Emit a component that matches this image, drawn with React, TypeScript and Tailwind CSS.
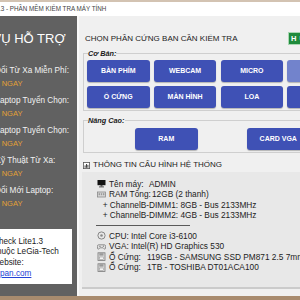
import React from "react";

function MonitorIcon() {
  return (
    <svg width="9" height="9" viewBox="0 0 9 9" className="shrink-0 mr-[3px]">
      <rect x="0.5" y="1" width="8" height="5.2" fill="#111" />
      <rect x="3.5" y="6.2" width="2" height="1.3" fill="#333" />
      <rect x="2" y="7.4" width="5" height="1" fill="#555" />
    </svg>
  );
}
function RamIcon() {
  return (
    <svg width="9" height="9" viewBox="0 0 9 9" className="shrink-0 mr-[3px]">
      <rect x="0.5" y="2" width="8" height="5" fill="#d8d8d8" stroke="#8a8a8a" strokeWidth="0.8" />
      <rect x="1.6" y="3.2" width="1.4" height="2" fill="#9a9a9a" />
      <rect x="3.8" y="3.2" width="1.4" height="2" fill="#9a9a9a" />
      <rect x="6" y="3.2" width="1.4" height="2" fill="#9a9a9a" />
    </svg>
  );
}
function CpuIcon() {
  return (
    <svg width="9" height="9" viewBox="0 0 9 9" className="shrink-0 mr-[3px]">
      <circle cx="4.5" cy="4.5" r="3.6" fill="#e8e8e8" stroke="#7a7a7a" strokeWidth="0.9" />
      <circle cx="4.5" cy="4.5" r="1.3" fill="#8a8a8a" />
    </svg>
  );
}
function VgaIcon() {
  return (
    <svg width="9" height="9" viewBox="0 0 9 9" className="shrink-0 mr-[3px]">
      <path d="M1.5 2.8 H7.5 Q8.6 2.8 8.6 4.5 L8.3 6.8 Q7.8 7.6 6.8 6.6 L6 5.8 H3 L2.2 6.6 Q1.2 7.6 0.7 6.8 L0.4 4.5 Q0.4 2.8 1.5 2.8 Z" fill="#e2e2e2" stroke="#7a7a7a" strokeWidth="0.8" />
      <rect x="2" y="3.9" width="1.8" height="0.7" fill="#777" />
      <circle cx="6.4" cy="4.2" r="0.6" fill="#777" />
    </svg>
  );
}
function DiskIcon() {
  return (
    <svg width="9" height="9" viewBox="0 0 9 9" className="shrink-0 mr-[3px]">
      <rect x="1" y="0.8" width="7" height="7.6" fill="#dcdcdc" stroke="#7a7a7a" strokeWidth="0.8" />
      <rect x="2.3" y="1.2" width="4.2" height="2.4" fill="#9a9a9a" />
      <rect x="2.3" y="5" width="4.4" height="2.6" fill="#f4f4f4" stroke="#8a8a8a" strokeWidth="0.5" />
    </svg>
  );
}
function ChartIcon() {
  return (
    <svg width="7" height="7" viewBox="0 0 7 7" className="shrink-0 mr-[3px]">
      <rect x="0.4" y="0.4" width="6.2" height="6.2" fill="#fff" stroke="#555" strokeWidth="0.8" />
      <rect x="1.6" y="3.4" width="1" height="2.4" fill="#444" />
      <rect x="3" y="2" width="1" height="3.8" fill="#444" />
      <rect x="4.4" y="2.8" width="1" height="3" fill="#444" />
    </svg>
  );
}

function Btn({ label, light }: { label: string; light?: boolean }) {
  return (
    <div
      className={
        "w-[62.5px] h-[22px] shrink-0 rounded-[3px] flex items-center justify-center text-white font-bold text-[7px] whitespace-nowrap shadow-[0_1px_1px_rgba(0,0,0,0.25)] " +
        (light ? "bg-[#7283cc]" : "bg-[#3f51b5]")
      }
    >
      {label}
    </div>
  );
}

function Pair({ label, ml }: { label: string; ml: string }) {
  return (
    <div className="flex flex-col mb-[4px]">
      <div className={"h-[13px] leading-[13px] text-[8.2px] text-[#f2f2f2] whitespace-nowrap " + ml}>{label}</div>
      <div className="h-[13px] leading-[13px] text-[7.5px] text-[#e3a036] whitespace-nowrap ml-[1.7px]">NGAY</div>
    </div>
  );
}

export default function App() {
  return (
    <div className="w-[300px] h-[300px] overflow-hidden bg-[#a88b6e] flex flex-col font-['Liberation_Sans',Arial,sans-serif]">
      <div className="h-[2px] shrink-0 bg-[#d3c3b2]" />
      <div className="h-[14px] shrink-0 bg-white flex items-center overflow-hidden">
        <span className="whitespace-nowrap text-[6.3px] text-[#444] -ml-[4.5px]">1.3 - PHẦN MỀM KIỂM TRA MÁY TÍNH</span>
      </div>
      <div className="h-[280px] shrink-0 flex">
        {/* left panel */}
        <div className="w-[77px] shrink-0 bg-[#616161] overflow-hidden flex flex-col">
          <div className="mt-[16px] h-[14px] leading-[14px] text-[13px] text-white whitespace-nowrap -ml-[7.5px]">VỤ HỖ TRỢ</div>
          <div className="mt-[18px] flex flex-col">
            <Pair label="Đổi Từ Xa Miễn Phí:" ml="-ml-[5px]" />
            <Pair label="Laptop Tuyển Chọn:" ml="-ml-[4.6px]" />
            <Pair label="Laptop Tuyển Chọn:" ml="-ml-[4.6px]" />
            <Pair label="Kỹ Thuật Từ Xa:" ml="-ml-[4.5px]" />
            <Pair label="Đổi Mới Laptop:" ml="-ml-[5px]" />
          </div>
          <div className="mt-[15px] w-[72px] h-[55px] bg-white pt-[7.5px] flex flex-col text-[8.2px] leading-[10.7px] text-[#222] whitespace-nowrap">
            <div className="-ml-[7px]">Check Lite1.3</div>
            <div className="-ml-[8px]">Thuộc LeGia-Tech</div>
            <div className="-ml-[8px]">Website:</div>
            <div className="text-[#2443d6] underline">pan.com</div>
          </div>
        </div>
        {/* right panel */}
        <div className="flex-1 min-w-0 bg-[#f0f0f0] border-l-[2px] border-[#f9f9f9] overflow-hidden flex flex-col">
          <div className="mt-[16px] h-[13px] ml-[6px] flex items-center">
            <span className="w-[203px] shrink-0 text-[8px] leading-[13px] text-[#222] whitespace-nowrap">CHỌN PHẦN CỨNG BẠN CẦN KIỂM TRA</span>
            <div className="w-[60px] h-[13px] shrink-0 bg-[#1f8b3c] border border-[#a9d7b2] pl-[2px] flex items-center text-white font-bold text-[7.5px] tracking-[3px] whitespace-nowrap">HƯỚNG DẪN</div>
          </div>
          <fieldset className="mt-[3.5px] ml-[4px] w-[240px] shrink-0 border border-[#cfcfcf] px-[3px] pt-[2.5px] pb-[2px]">
            <legend className="ml-[1px] text-[7.3px] leading-[9px] font-bold italic text-[#1a1a1a]">Cơ Bản:</legend>
            <div className="flex flex-col gap-[4px]">
              <div className="flex gap-[4.3px]">
                <Btn label="BÀN PHÍM" />
                <Btn label="WEBCAM" />
                <Btn label="MICRO" />
                <Btn label="CHUỘT" light />
              </div>
              <div className="flex gap-[4.3px]">
                <Btn label="Ổ CỨNG" />
                <Btn label="MÀN HÌNH" />
                <Btn label="LOA" />
                <Btn label="PIN" />
              </div>
            </div>
          </fieldset>
          <fieldset className="mt-[4.5px] ml-[4px] w-[240px] shrink-0 border border-[#cfcfcf] px-[3px] pt-[3.5px] pb-[2px]">
            <legend className="ml-[1px] text-[7.3px] leading-[9px] font-bold italic text-[#1a1a1a]">Nâng Cao:</legend>
            <div className="flex gap-[49.5px] ml-[48px]">
              <Btn label="RAM" />
              <Btn label="CARD VGA" />
            </div>
          </fieldset>
          <div className="mt-[7px] ml-[4px] h-[10px] flex items-center">
            <ChartIcon />
            <span className="text-[8px] leading-[10px] text-[#222] whitespace-nowrap">THÔNG TIN CẤU HÌNH HỆ THỐNG</span>
          </div>
          <div className="mt-[2px] ml-[3px] w-[240px] h-[117px] shrink-0 bg-[#e8e8e8] border-b-[2px] border-[#cbcbcb] pt-[6.8px] flex flex-col text-[8.3px] leading-[10.4px] text-[#222] whitespace-nowrap">
            <div className="h-[10.4px] pl-[15px] flex items-center">
              <MonitorIcon />
              <span className="w-[40px] shrink-0">Tên máy:</span>
              <span>ADMIN</span>
            </div>
            <div className="h-[10.4px] pl-[15px] flex items-center">
              <RamIcon />
              <span className="w-[43px] shrink-0">RAM Tổng:</span>
              <span>12GB (2 thanh)</span>
            </div>
            <div className="h-[10.4px] pl-[20.7px] flex items-center">+ ChannelB-DIMM1: 8GB - Bus 2133MHz</div>
            <div className="h-[10.4px] pl-[20.7px] flex items-center">+ ChannelB-DIMM2: 4GB - Bus 2133MHz</div>
            <div className="h-[10.4px] flex items-center pl-[14px]">
              <div className="w-[94px] h-px bg-[#5a5a5a]" />
            </div>
            <div className="h-[10.4px] pl-[15px] flex items-center">
              <CpuIcon />
              <span className="w-[22px] shrink-0">CPU:</span>
              <span>Intel Core i3-6100</span>
            </div>
            <div className="h-[10.4px] pl-[15px] flex items-center">
              <VgaIcon />
              <span className="w-[22px] shrink-0">VGA:</span>
              <span>Intel(R) HD Graphics 530</span>
            </div>
            <div className="h-[10.4px] pl-[15px] flex items-center">
              <DiskIcon />
              <span className="w-[38px] shrink-0">Ổ Cứng:</span>
              <span>119GB - SAMSUNG SSD PM871 2.5 7mm</span>
            </div>
            <div className="h-[10.4px] pl-[15px] flex items-center">
              <DiskIcon />
              <span className="w-[38px] shrink-0">Ổ Cứng:</span>
              <span>1TB - TOSHIBA DT01ACA100</span>
            </div>
          </div>
        </div>
      </div>
    </div>
  );
}
